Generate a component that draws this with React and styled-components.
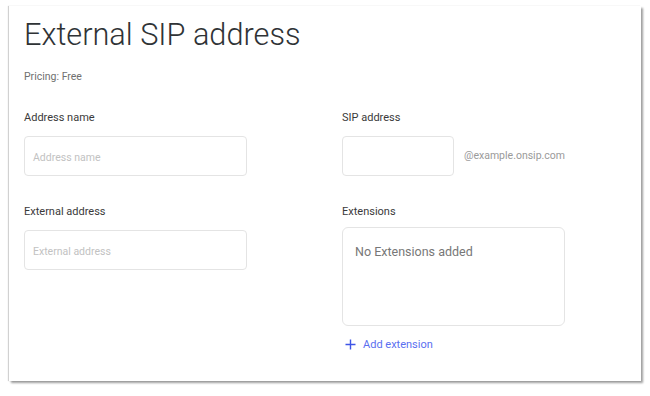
import React from "react";
import styled, { createGlobalStyle } from "styled-components";

const Global = createGlobalStyle`
  html, body { margin: 0; padding: 0; background: #fff; }
  body { font-family: Roboto, "Liberation Sans", Arial, sans-serif; }
  * { box-sizing: border-box; }
`;

const Page = styled.div`
  width: 650px;
  height: 396px;
  padding: 6px 0 0 9px;
`;

const Card = styled.div`
  width: 632px;
  height: 375px;
  background: #fff;
  box-shadow: -1px 0 1px rgba(0,0,0,0.18), 2px 2px 2px rgba(0,0,0,0.38);
  padding: 10px 16px 0 15px;
`;

const Title = styled.h1`
  margin: 0;
  font-size: 30.7px;
  font-weight: 300;
  line-height: 37px;
  color: #2f3336;
`;

const Pricing = styled.div`
  margin-top: 17px;
  font-size: 10.5px;
  color: #707070;
  line-height: 14px;
`;

const Grid = styled.div`
  margin-top: 27px;
  display: grid;
  grid-template-columns: 223px 1fr;
  column-gap: 95px;
  row-gap: 29px;
  align-items: start;
`;

const Field = styled.div`
  display: flex;
  flex-direction: column;
`;

const Label = styled.div`
  font-size: 11px;
  line-height: 14px;
  color: #3a3a3a;
  margin-bottom: ${p => p.$gap || 11}px;
`;

const Input = styled.div`
  width: ${p => p.$w || 223}px;
  height: 40px;
  border: 1px solid #e4e4e4;
  border-radius: 4px;
  display: flex;
  align-items: center;
  padding-left: 8px;
  font-size: 10.5px;
  color: #c2c2c2;
  padding-top: 3px;
`;

const Row = styled.div`
  display: flex;
  align-items: center;
  gap: 10px;
`;

const Domain = styled.span`
  font-size: 10.5px;
  color: #9a9a9a;
  margin-top: -2px;
`;

const ExtBox = styled.div`
  width: 223px;
  height: 99px;
  border: 1px solid #e4e4e4;
  border-radius: 6px;
  padding: 16px 12px;
  font-size: 12.5px;
  color: #777;
`;

const AddLink = styled.div`
  margin-top: 12px;
  margin-left: 3px;
  display: flex;
  align-items: center;
  gap: 7px;
  font-size: 11px;
  color: #5a6ff0;
`;

export default function App() {
  return (
    <>
      <Global />
      <Page>
        <Card>
          <Title>External SIP address</Title>
          <Pricing>Pricing: Free</Pricing>
          <Grid>
            <Field>
              <Label>Address name</Label>
              <Input>Address name</Input>
            </Field>
            <Field>
              <Label>SIP address</Label>
              <Row>
                <Input $w={112} />
                <Domain>@example.onsip.com</Domain>
              </Row>
            </Field>
            <Field>
              <Label>External address</Label>
              <Input>External address</Input>
            </Field>
            <Field>
              <Label $gap={8}>Extensions</Label>
              <ExtBox>No Extensions added</ExtBox>
              <AddLink>
                <svg width="11" height="11" viewBox="0 0 11 11">
                  <path d="M5.5 0.5v10M0.5 5.5h10" stroke="#3f55e6" strokeWidth="1.4" fill="none" />
                </svg>
                Add extension
              </AddLink>
            </Field>
          </Grid>
        </Card>
      </Page>
    </>
  );
}
